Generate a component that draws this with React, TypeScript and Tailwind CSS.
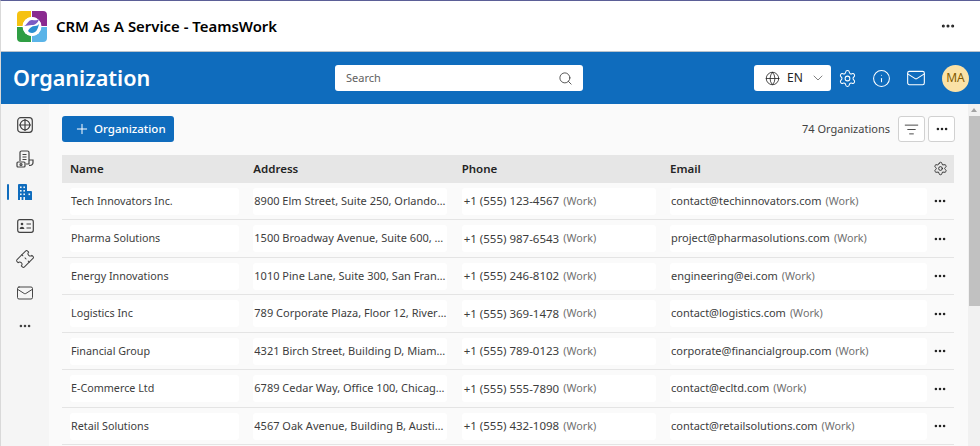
import { ChevronDown, Globe, Info, Mail, Plus, Search, Settings, Ticket, MoreHorizontal, ListFilter } from "lucide-react";

const rows = [
  { name: "Tech Innovators Inc.", address: "8900 Elm Street, Suite 250, Orlando, FL 32801", phone: "+1 (555) 123-4567", email: "contact@techinnovators.com" },
  { name: "Pharma Solutions", address: "1500 Broadway Avenue, Suite 600, New York, NY", phone: "+1 (555) 987-6543", email: "project@pharmasolutions.com" },
  { name: "Energy Innovations", address: "1010 Pine Lane, Suite 300, San Francisco, CA", phone: "+1 (555) 246-8102", email: "engineering@ei.com" },
  { name: "Logistics Inc", address: "789 Corporate Plaza, Floor 12, Riverside, CA", phone: "+1 (555) 369-1478", email: "contact@logistics.com" },
  { name: "Financial Group", address: "4321 Birch Street, Building D, Miami, FL 33101", phone: "+1 (555) 789-0123", email: "corporate@financialgroup.com" },
  { name: "E-Commerce Ltd", address: "6789 Cedar Way, Office 100, Chicago, IL 60601", phone: "+1 (555) 555-7890", email: "contact@ecltd.com" },
  { name: "Retail Solutions", address: "4567 Oak Avenue, Building B, Austin, TX 78701", phone: "+1 (555) 432-1098", email: "contact@retailsolutions.com" },
];

const gridCols = "grid grid-cols-[169px_194px_194px_257px_12.700px] gap-x-[14.330px]";

function Logo() {
  return (
    <svg width="30" height="31" viewBox="0 0 30 31" className="shrink-0">
      <path d="M4 0h10v6a9 9 0 0 0-8 9H0V4a4 4 0 0 1 4-4z" fill="#f5c211" />
      <path d="M15 0h11a4 4 0 0 1 4 4v11h-6a9 9 0 0 0-9-9z" fill="#8a2a8f" />
      <path d="M0 16h6a9 9 0 0 0 8 9v6H4a4 4 0 0 1-4-4z" fill="#2f9e44" />
      <path d="M24 16h6v11a4 4 0 0 1-4 4H15v-6a9 9 0 0 0 9-9z" fill="#5ab4e8" />
      <circle cx="15" cy="15.500" r="9.500" fill="#fff" />
      <path d="M7 15c3-1 4-6 8-6 3 0 4 1 7-1-1 4-4 6-7 6-3 0-5 1-8 1z" fill="#7b5cc4" />
      <path d="M11 20c1-3 4-5 7-5 2 0 3-1 4-2-1 5-3 9-7 9-2 0-3-1-4-2z" fill="#2a8fd0" />
    </svg>
  );
}

function Dots({ className = "" }: { className?: string }) {
  return <MoreHorizontal size={14} strokeWidth={2.400} className={className} />;
}

function NavBuilding() {
  return (
    <svg width="14" height="16" viewBox="0 0 14 16" fill="#0f6cbd">
      <path d="M1 0h7a1 1 0 0 1 1 1v6h4a1 1 0 0 1 1 1v8H0V1a1 1 0 0 1 1-1z" />
      <g fill="#f5f5f5">
        <rect x="2" y="2.500" width="1.600" height="1.600" />
        <rect x="5.400" y="2.500" width="1.600" height="1.600" />
        <rect x="2" y="6" width="1.600" height="1.600" />
        <rect x="5.400" y="6" width="1.600" height="1.600" />
        <rect x="2" y="9.500" width="1.600" height="1.600" />
        <rect x="5.400" y="9.500" width="1.600" height="1.600" />
        <rect x="10.500" y="9.500" width="1.600" height="1.600" />
        <rect x="2" y="13" width="1.600" height="3" />
        <rect x="5.400" y="13" width="1.600" height="3" />
      </g>
    </svg>
  );
}

function NavGlobeBox() {
  return (
    <svg width="16" height="16" viewBox="0 0 16 16" fill="none" stroke="#424242" strokeWidth="1.200">
      <rect x="0.700" y="0.700" width="14.600" height="14.600" rx="3" />
      <circle cx="8" cy="8" r="4.800" />
      <path d="M8 2v12M2 8h12" />
    </svg>
  );
}

function NavDeal() {
  return (
    <svg width="18" height="18" viewBox="0 0 18 18" fill="none" stroke="#424242" strokeWidth="1.200">
      <path d="M4 11V2.500A1.500 1.500 0 0 1 5.500 1h6A1.500 1.500 0 0 1 13 2.500V14h-3" />
      <path d="M6.500 4.500h4M6.500 7h4M6.500 9.500h4" />
      <rect x="1" y="12" width="8" height="5" rx="1" />
      <circle cx="5" cy="14.500" r="1" />
      <path d="M13 10h4v2.500a3 3 0 0 1-3 3h-1" />
    </svg>
  );
}

function NavCard() {
  return (
    <svg width="17" height="14" viewBox="0 0 17 14" fill="none" stroke="#424242" strokeWidth="1.200">
      <rect x="0.700" y="0.700" width="15.600" height="12.600" rx="2" />
      <circle cx="5" cy="5" r="1.300" fill="#424242" stroke="none" />
      <path d="M2.700 10c0-3 4.600-3 4.600 0z" fill="#424242" stroke="none" />
      <path d="M9.500 5h4.500M9.500 9h4.500" />
    </svg>
  );
}

export default function App() {
  return (
    <div className="flex h-[446px] w-[980px] flex-col overflow-hidden border-t border-l border-t-[#5b5f97] border-l-[#d9d9d9] bg-white font-['Noto_Sans',sans-serif] text-[#242424]">
      <header className="flex h-[51px] shrink-0 items-center justify-between border-b border-[#b9c3cc] pr-[24px] pl-[16px]">
        <div className="flex items-center gap-[9px]">
          <Logo />
          <span className="text-[14.900px] font-semibold text-black">CRM As A Service - TeamsWork</span>
        </div>
        <MoreHorizontal size={16} strokeWidth={2.600} className="text-[#242424]" />
      </header>

      <div className="grid h-[52px] shrink-0 grid-cols-[334px_248px_1fr] items-center bg-[#0f6cbd] text-white">
        <h1 className="pl-[12px] text-[21.600px] leading-none font-semibold">Organization</h1>
        <div className="flex h-[26px] items-center justify-between rounded-[3px] bg-white pr-[10px] pl-[11px] text-[11px] text-[#616161]">
          <span>Search</span>
          <Search size={15} strokeWidth={1.400} className="text-[#424242]" />
        </div>
        <div className="flex items-center justify-end pr-[11px]">
          <div className="mr-[7px] flex h-[26px] w-[77px] items-center gap-[7px] rounded-[3px] bg-white pl-[11px] text-[12px] text-[#242424]">
            <Globe size={15} strokeWidth={1.300} />
            <span>EN</span>
            <ChevronDown size={16} strokeWidth={1} className="text-[#424242]" />
          </div>
          <Settings size={19} strokeWidth={1.300} className="mr-[15px]" />
          <Info size={19} strokeWidth={1.300} className="mr-[15px]" />
          <Mail size={20} strokeWidth={1.300} className="mr-[16px]" />
          <div className="flex h-[27px] w-[27px] items-center justify-center rounded-full bg-[#fbe2a6] text-[12px] text-[#835b00]">MA</div>
        </div>
      </div>

      <div className="flex min-h-0 flex-1">
        <nav className="relative flex w-[48px] shrink-0 flex-col items-center bg-[#f5f5f5] pt-[11.500px]">
          <div className="flex h-[18px] items-center"><NavGlobeBox /></div>
          <div className="mt-[16px] flex h-[18px] items-center"><NavDeal /></div>
          <div className="mt-[15.500px] flex h-[18px] items-center"><NavBuilding /></div>
          <span className="absolute top-[80px] left-[6px] h-[16px] w-[2px] rounded bg-[#0f6cbd]" />
          <div className="mt-[15.500px] flex h-[18px] items-center"><NavCard /></div>
          <div className="mt-[15.500px] flex h-[18px] items-center"><Ticket size={18} strokeWidth={1.300} className="-rotate-45 text-[#424242]" /></div>
          <div className="mt-[15.500px] flex h-[18px] items-center"><Mail size={18} strokeWidth={1.300} className="text-[#424242]" /></div>
          <div className="mt-[15.500px] flex h-[18px] items-center"><Dots className="text-[#424242]" /></div>
        </nav>

        <main className="min-w-0 flex-1 bg-[#fafafa] pl-[13px]">
          <div className="flex h-[51px] w-[893px] items-start justify-between pt-[12px]">
            <button className="flex h-[26px] w-[112px] items-center gap-[4px] rounded-[3px] bg-[#0f6cbd] pl-[12px] text-[11.500px] font-medium text-white">
              <Plus size={16} strokeWidth={1.500} />
              Organization
            </button>
            <div className="flex items-center">
              <span className="mr-[8px] text-[11px] text-[#424242]">74 Organizations</span>
              <div className="mr-[3px] flex h-[26px] w-[27px] items-center justify-center rounded-[3px] border border-[#d1d1d1] bg-white">
                <ListFilter size={15} strokeWidth={1.300} />
              </div>
              <div className="flex h-[26px] w-[27px] items-center justify-center rounded-[3px] border border-[#d1d1d1] bg-white">
                <Dots />
              </div>
            </div>
          </div>

          <div className="w-[892px]">
            <div className={`${gridCols} h-[27.500px] items-center bg-[#e6e6e6] pl-[8px] text-[11.500px] font-semibold text-[#242424]`}>
              <span>Name</span>
              <span>Address</span>
              <span>Phone</span>
              <span>Email</span>
              <span className="-ml-[14.330px] flex justify-center">
                <Settings size={15} strokeWidth={1.400} />
              </span>
            </div>
            {rows.map((row) => (
              <div key={row.name} className={`${gridCols} h-[37.500px] items-start border-b border-[#e4e4e4] pt-[5px] pl-[8px] text-[#3d3d3d]`}>
                <div className="flex h-[27px] items-center rounded-[3px] bg-white pl-[1px] text-[10.750px]">{row.name}</div>
                <div className="flex h-[27px] items-center rounded-[3px] bg-white pl-[1px] text-[11px]">
                  <span className="truncate">{row.address}</span>
                </div>
                <div className="flex h-[27px] items-center rounded-[3px] bg-white pl-[2px] text-[11.500px]">
                  {row.phone}<span className="ml-[4px] text-[10.750px] text-[#707070]">(Work)</span>
                </div>
                <div className="flex h-[27px] items-center rounded-[3px] bg-white pl-[1px] text-[11px]">
                  {row.email}<span className="ml-[4px] text-[10.750px] text-[#707070]">(Work)</span>
                </div>
                <div className="-ml-[14.330px] flex h-[27px] items-center justify-center text-[#242424]"><Dots /></div>
              </div>
            ))}
          </div>
        </main>

        <div className="flex w-[12px] shrink-0 flex-col items-center bg-[#f1f1f1]">
          <span className="mt-[4px] h-0 w-0 border-x-[3px] border-b-[4px] border-x-transparent border-b-[#a3a3a3]" />
          <div className="mt-[4px] h-[190px] w-[11px] bg-[#c1c1c1]" />
        </div>
      </div>
    </div>
  );
}
